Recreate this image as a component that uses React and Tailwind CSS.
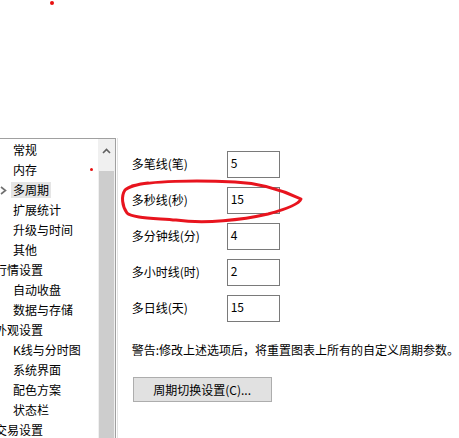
import React from 'react';

const treeItems = [
    { label: '常规', level: 1 },
    { label: '内存', level: 1 },
    { label: '多周期', level: 1, selected: true },
    { label: '扩展统计', level: 1 },
    { label: '升级与时间', level: 1 },
    { label: '其他', level: 1 },
    { label: '行情设置', level: 0 },
    { label: '自动收盘', level: 1 },
    { label: '数据与存储', level: 1 },
    { label: '外观设置', level: 0 },
    { label: 'K线与分时图', level: 1 },
    { label: '系统界面', level: 1 },
    { label: '配色方案', level: 1 },
    { label: '状态栏', level: 1 },
    { label: '交易设置', level: 0 },
];

const periodFields = [
    { label: '多笔线(笔)', value: '5' },
    { label: '多秒线(秒)', value: '15' },
    { label: '多分钟线(分)', value: '4' },
    { label: '多小时线(时)', value: '2' },
    { label: '多日线(天)', value: '15' },
];

const TreeRow = ({ item }) => {
    if (item.level === 0) {
        return <div className="h-[20px] leading-[20px] ml-[-5px] whitespace-nowrap">{item.label}</div>;
    }
    return (
        <div className="h-[20px] flex items-center relative whitespace-nowrap">
            {item.selected && (
                <svg className="absolute left-0 top-[6px]" width="7" height="9" viewBox="0 0 7 9">
                    <path d="M1,1 L5.5,4.5 L1,8" fill="none" stroke="#707070" strokeWidth="1.6" />
                </svg>
            )}
            <span className={`ml-[11px] px-[2px] leading-[16px] ${item.selected ? 'bg-[#e5e5e5]' : ''}`}>{item.label}</span>
        </div>
    );
};

const App = () => {
    return (
        <div className="w-[459px] h-[438px] relative overflow-hidden bg-white text-black text-[12px] font-['Noto_Sans_CJK_SC','Microsoft_YaHei',sans-serif]">
            <div className="flex pt-[138px] h-full">
                {/* tree */}
                <div className="w-[116px] h-full flex border-t border-r border-[#a0a0a0]">
                    <div className="w-[98px] pt-[1px] overflow-hidden">
                        {treeItems.map(it => <TreeRow key={it.label} item={it} />)}
                    </div>
                    <div className="w-[17px] bg-[#f0f0f0] flex flex-col">
                        <div className="h-[24px] flex items-center justify-center">
                            <svg width="9" height="6" viewBox="0 0 9 6">
                                <path d="M1,5 L4.5,1.5 L8,5" fill="none" stroke="#606060" strokeWidth="1.6" />
                            </svg>
                        </div>
                        <div className="flex-1 mx-[1px] mt-[8px] bg-[#cdcdcd]" />
                    </div>
                </div>
                <div className="w-[2px]" />
                <div className="w-px h-full bg-[#e3e3e3]" />

                {/* options panel */}
                <div className="flex-1 pl-[14px] pt-[13px]">
                    <div className="flex flex-col gap-[9px]">
                        {periodFields.map(f => (
                            <div key={f.label} className="flex items-center h-[27px]">
                                <div className="w-[95px] mt-[-2px] whitespace-nowrap">{f.label}</div>
                                <div className="w-[53px] h-[27px] border border-[#7a7a7a] pl-[3px] pt-[3px] leading-[16px]">{f.value}</div>
                            </div>
                        ))}
                    </div>
                    <div className="mt-[20px] leading-[16px] whitespace-nowrap">警告:修改上述选项后，将重置图表上所有的自定义周期参数。</div>
                    <button className="mt-[19px] ml-[1px] w-[139px] h-[25px] bg-[#e1e1e1] border border-[#adadad] text-[12px] leading-[16px]">
                        周期切换设置(C)...
                    </button>
                </div>
            </div>

            {/* red annotation marks */}
            <div className="absolute left-[50px] top-[1px] w-[4px] h-[4px] rounded-full bg-[#e81010]" />
            <div className="absolute left-[90px] top-[168px] w-[3px] h-[3px] rounded-full bg-[#e81010]" />
            <svg className="absolute left-0 top-0 pointer-events-none" width="459" height="438" viewBox="0 0 459 438">
                <path
                    d="M132,186 C150,181 195,180 235,182 C262,183 282,190 301,199 C299,204 287,209 268,214 C242,220 205,224 176,220 C152,218 132,218 127,213 C122,206 121,196 125,190 C128,187 138,184 148,183"
                    fill="none"
                    stroke="#e8141e"
                    strokeWidth="3"
                    strokeLinecap="round"
                    strokeLinejoin="round"
                />
            </svg>
        </div>
    );
};

export default App;
